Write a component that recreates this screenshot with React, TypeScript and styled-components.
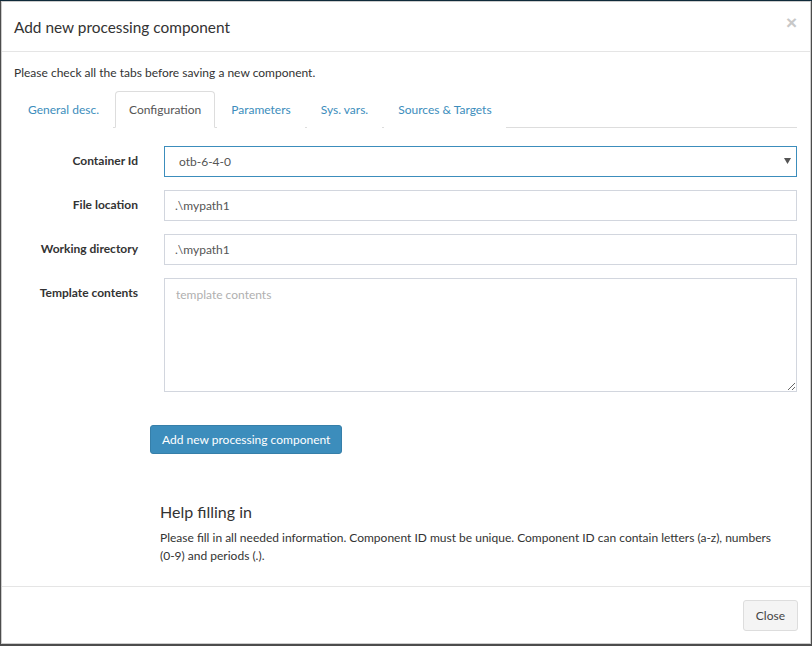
import React from 'react';
import styled, { createGlobalStyle } from 'styled-components';

const Global = createGlobalStyle`
  html, body { margin: 0; padding: 0; }
  body {
    background: #4c4c4c;
    font-family: Lato, "Open Sans", "Liberation Sans", sans-serif;
    font-size: 12px;
    line-height: 18px;
    color: #333;
  }
  * { box-sizing: border-box; }
`;

const Backdrop = styled.div`
  padding: 1px 1px 2px 1px;
  box-shadow: inset 0 1px 0 #0f2a3a;
  width: 812px;
  height: 646px;
`;

const Modal = styled.div`
  width: 810px;
  height: 643px;
  background: #fff;
  border: 1px solid rgba(0, 0, 0, 0.2);
  display: flex;
  flex-direction: column;
`;

const Header = styled.div`
  display: flex;
  align-items: center;
  justify-content: space-between;
  height: 50px;
  padding: 0 13px 0 12px;
  border-bottom: 1px solid #e5e5e5;
`;

const Title = styled.h4`
  margin: 0;
  font-size: 15.4px;
  font-weight: 400;
  color: #333;
`;

const CloseX = styled.button`
  border: 0;
  background: none;
  padding: 0;
  font-size: 19px;
  line-height: 1;
  font-weight: 700;
  color: #c8c8c8;
  cursor: pointer;
  margin-top: -9px;
  font-family: "Liberation Sans", sans-serif;
`;

const Body = styled.div`
  flex: 1;
  padding: 12px 13px 0 12px;
`;

const Intro = styled.p`
  margin: 0 0 9px 0;
`;

const Tabs = styled.ul`
  list-style: none;
  margin: 0;
  padding: 0;
  display: flex;
  border-bottom: 1px solid #ddd;
  height: 37px;
`;

const Tab = styled.li<{ $active?: boolean }>`
  margin-right: 2px;
  margin-bottom: -1px;
  padding: 9px 13px 9px 13px;
  border: 1px solid ${p => (p.$active ? '#ddd' : 'transparent')};
  border-bottom-color: ${p => (p.$active ? '#fff' : 'transparent')};
  border-radius: 4px 4px 0 0;
  background: #fff;
  color: ${p => (p.$active ? '#555' : '#3c8dbc')};
  cursor: pointer;
  white-space: nowrap;
`;

const Form = styled.form`
  display: grid;
  grid-template-columns: 124px 1fr;
  column-gap: 26px;
  row-gap: 13px;
  padding-top: 18px;
`;

const Label = styled.label<{ $top?: boolean }>`
  text-align: right;
  font-weight: 700;
  align-self: ${p => (p.$top ? 'start' : 'center')};
  padding-top: ${p => (p.$top ? '6px' : '0')};
  margin-top: ${p => (p.$top ? '0' : '-2px')};
  color: #333;
`;

const SelectWrap = styled.div`
  position: relative;
`;

const Select = styled.select`
  width: 100%;
  height: 31px;
  border: 1px solid #3c8dbc;
  border-radius: 0;
  padding: 0 14px;
  font: inherit;
  color: #555;
  background: #fff;
  appearance: none;
  outline: none;
`;

const Caret = styled.svg`
  position: absolute;
  right: 6px;
  top: 12px;
  pointer-events: none;
`;

const Input = styled.input`
  width: 100%;
  height: 31px;
  border: 1px solid #d2d6de;
  border-radius: 0;
  padding: 0 10px;
  font: inherit;
  color: #555;
  outline: none;
`;

const TextArea = styled.textarea`
  width: 100%;
  height: 114px;
  border: 1px solid #d2d6de;
  border-radius: 0;
  padding: 7px 11px;
  font: inherit;
  color: #555;
  outline: none;
  display: block;
  &::placeholder { color: #b0b0b0; }
`;

const Actions = styled.div`
  padding: 33px 0 0 136px;
`;

const PrimaryButton = styled.button`
  height: 29px;
  padding: 0 11px;
  background: #3c8dbc;
  border: 1px solid #367fa9;
  border-radius: 3px;
  color: #fff;
  font: inherit;
  cursor: pointer;
`;

const Help = styled.div`
  padding: 47px 0 0 146px;
  max-width: 768px;
`;

const HelpTitle = styled.h4`
  margin: 0 0 6px 0;
  font-size: 16px;
  font-weight: 400;
  line-height: 22px;
`;

const HelpText = styled.p`
  margin: 0;
`;

const Footer = styled.div`
  display: flex;
  justify-content: flex-end;
  padding: 13px 12px 13px 15px;
  border-top: 1px solid #e5e5e5;
  height: 57px;
`;

const DefaultButton = styled.button`
  height: 31px;
  padding: 0 12px;
  background: #f4f4f4;
  border: 1px solid #ddd;
  border-radius: 3px;
  color: #444;
  font: inherit;
  cursor: pointer;
`;

const tabs = ['General desc.', 'Configuration', 'Parameters', 'Sys. vars.', 'Sources & Targets'];

export default function App() {
  return (
    <>
      <Global />
      <Backdrop>
        <Modal>
          <Header>
            <Title>Add new processing component</Title>
            <CloseX aria-label="Close">×</CloseX>
          </Header>
          <Body>
            <Intro>Please check all the tabs before saving a new component.</Intro>
            <Tabs>
              {tabs.map(t => (
                <Tab key={t} $active={t === 'Configuration'}>{t}</Tab>
              ))}
            </Tabs>
            <Form onSubmit={e => e.preventDefault()}>
              <Label>Container Id</Label>
              <SelectWrap>
                <Select defaultValue="otb-6-4-0">
                  <option value="otb-6-4-0">otb-6-4-0</option>
                </Select>
                <Caret width="7" height="6" viewBox="0 0 7 6">
                  <path d="M0 0H7L3.5 6Z" fill="#555" />
                </Caret>
              </SelectWrap>
              <Label>File location</Label>
              <Input defaultValue=".\mypath1" />
              <Label>Working directory</Label>
              <Input defaultValue=".\mypath1" />
              <Label $top>Template contents</Label>
              <TextArea placeholder="template contents" />
            </Form>
            <Actions>
              <PrimaryButton type="button">Add new processing component</PrimaryButton>
            </Actions>
            <Help>
              <HelpTitle>Help filling in</HelpTitle>
              <HelpText>
                Please fill in all needed information. Component ID must be unique. Component ID can contain letters (a-z), numbers (0-9) and periods (.).
              </HelpText>
            </Help>
          </Body>
          <Footer>
            <DefaultButton type="button">Close</DefaultButton>
          </Footer>
        </Modal>
      </Backdrop>
    </>
  );
}
